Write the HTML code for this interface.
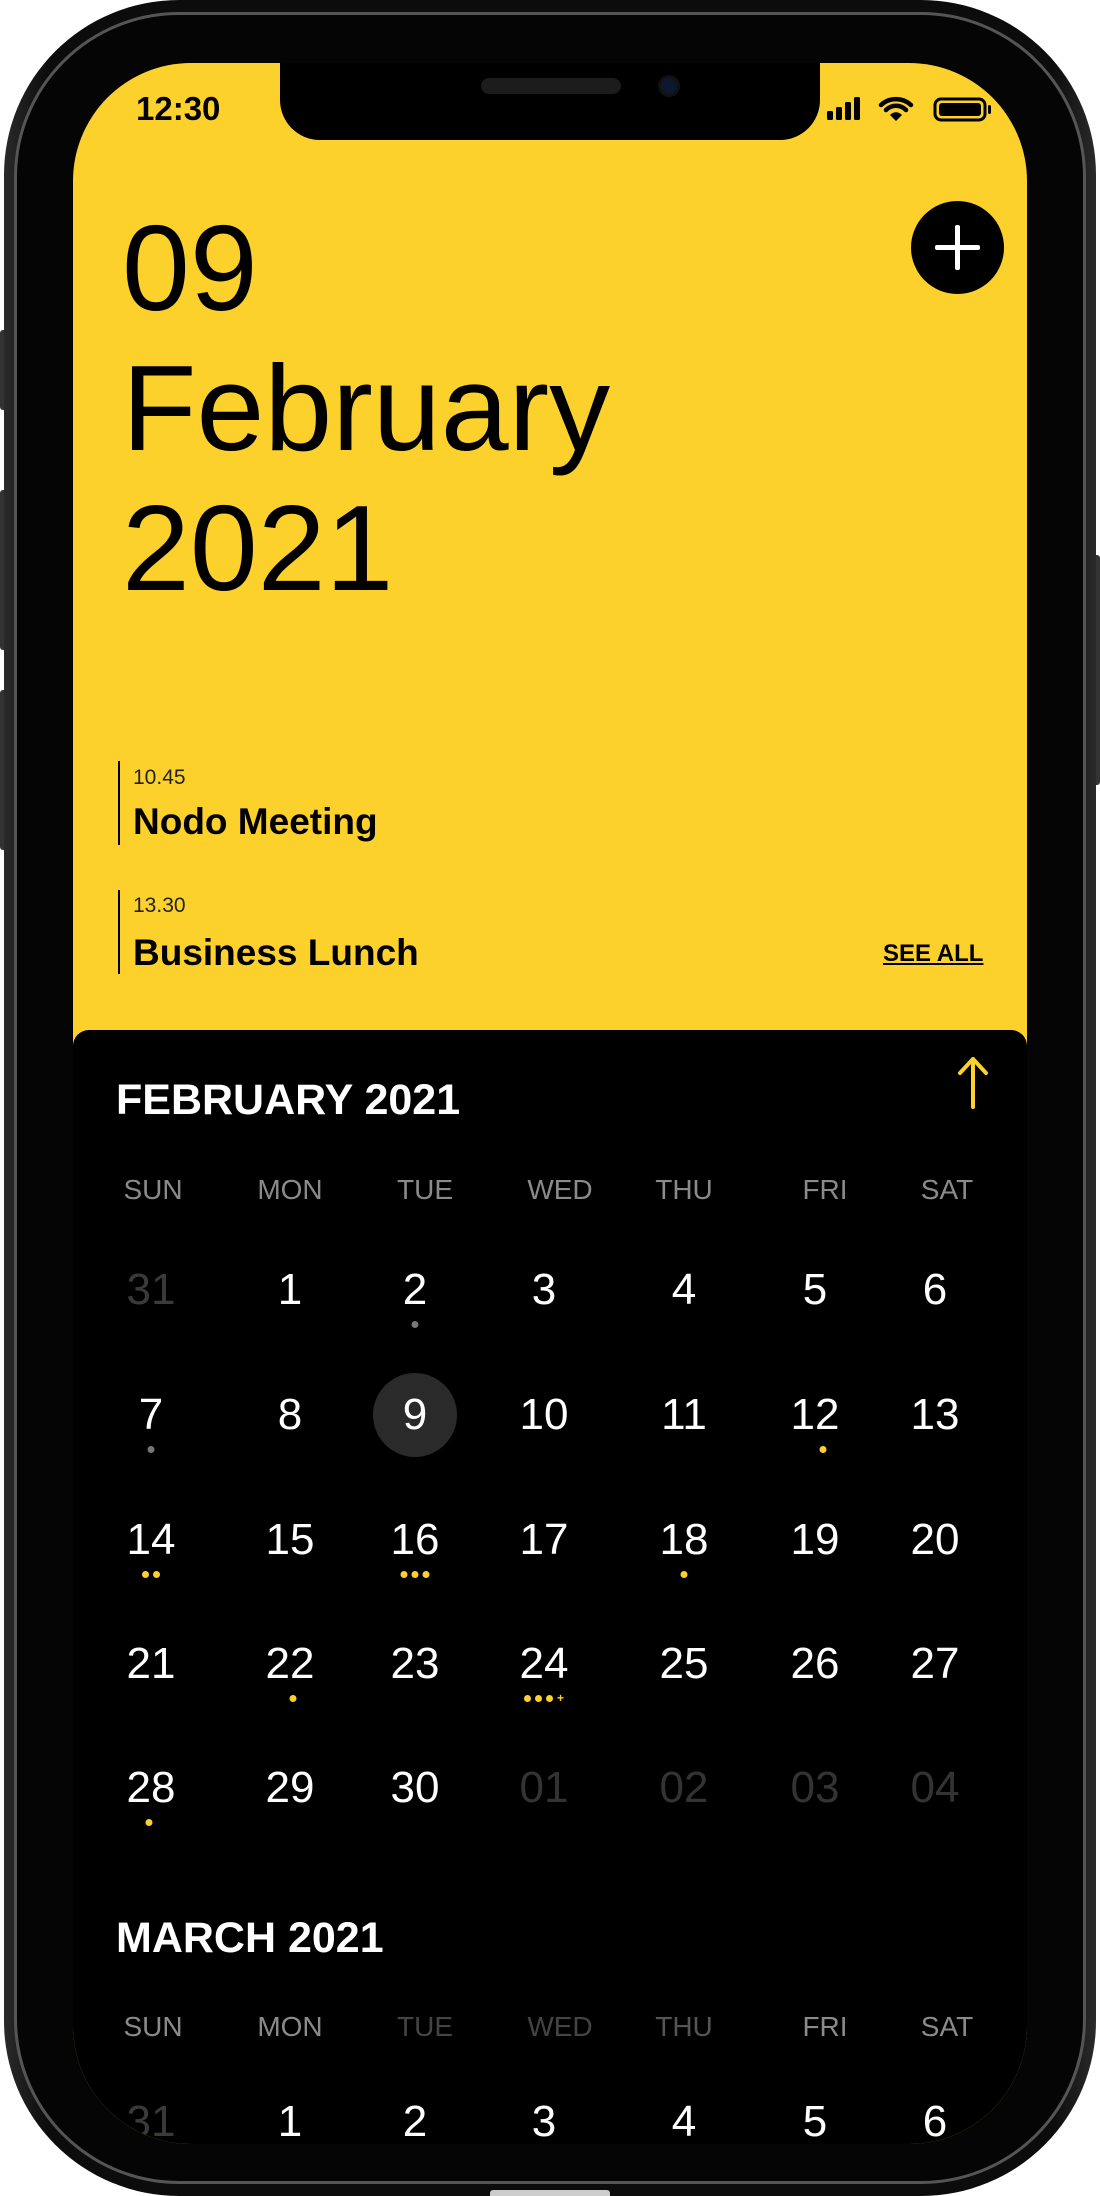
<!DOCTYPE html>
<html><head><meta charset="utf-8"><style>
*{margin:0;padding:0;box-sizing:border-box}
html,body{width:1100px;height:2196px;background:#fff;overflow:hidden;font-family:"Liberation Sans",sans-serif}
.abs{position:absolute;white-space:nowrap}
#body{position:absolute;left:4px;top:0;width:1092px;height:2196px;border-radius:175px;background:linear-gradient(90deg,#2a2a2a,#0c0c0c 4%,#0c0c0c 96%,#2a2a2a);}
#rim{position:absolute;left:14px;top:12px;width:1072px;height:2172px;border-radius:165px;border:3px solid #555;background:#050505}
#screen{position:absolute;left:73px;top:63px;width:954px;height:2081px;border-radius:118px;overflow:hidden;background:#FDD12B}
.btn{position:absolute;background:#333;border-radius:3px}
.wd{position:absolute;width:120px;text-align:center;font-size:28px;color:#8a8a8a;transform:translateX(-50%);line-height:40px}
.dt{position:absolute;width:120px;text-align:center;font-size:44px;color:#fff;transform:translateX(-50%);line-height:56px}
.dots{position:absolute;display:flex;gap:4px;transform:translateX(-50%)}
.dots i{display:block;width:7px;height:7px;border-radius:50%;background:#FDD12B}
</style></head><body>
<div class="btn" style="left:0;top:330px;width:8px;height:80px"></div>
<div class="btn" style="left:0;top:490px;width:8px;height:160px"></div>
<div class="btn" style="left:0;top:690px;width:8px;height:160px"></div>
<div class="btn" style="left:1092px;top:555px;width:8px;height:230px"></div>
<div id="body"></div>
<div id="rim"></div>
<div id="screen">
  <div class="abs" style="left:207px;top:-10px;width:540px;height:87px;background:#000;border-radius:0 0 40px 40px"></div>
  <div class="abs" style="left:408px;top:15px;width:140px;height:16px;background:#1c1c1c;border-radius:8px"></div>
  <div class="abs" style="left:585px;top:12px;width:22px;height:22px;background:#0b1830;border-radius:50%;border:3px solid #111"></div>
  <div class="abs" style="left:63px;top:26px;font-size:33px;font-weight:700;line-height:40px;color:#000">12:30</div>
  <svg class="abs" style="left:750px;top:30px" width="190" height="32" viewBox="0 0 190 32">
    <rect x="4" y="18" width="6" height="9" rx="1.5"/><rect x="13" y="14" width="6" height="13" rx="1.5"/><rect x="22" y="9" width="6" height="18" rx="1.5"/><rect x="31" y="4" width="6" height="23" rx="1.5"/>
    <path d="M58 12a22 22 0 0 1 30 0" stroke="#000" stroke-width="4.5" fill="none" stroke-linecap="round"/>
    <path d="M63 17a14 14 0 0 1 20 0" stroke="#000" stroke-width="4.5" fill="none" stroke-linecap="round"/>
    <path d="M67 22l6 6 6-6a8 8 0 0 0-12 0z"/>
    <rect x="112" y="6" width="50" height="21" rx="6" fill="none" stroke="#000" stroke-width="3"/>
    <rect x="116" y="10" width="42" height="13" rx="3"/>
    <rect x="165" y="12" width="3" height="9" rx="1.5"/>
  </svg>
  <div class="abs" style="left:49px;top:135px;font-size:122px;line-height:140px;color:#000">09<br>February<br>2021</div>
  <div class="abs" style="left:838px;top:138px;width:93px;height:93px;border-radius:50%;background:#000"></div>
  <div class="abs" style="left:882px;top:162px;width:5px;height:45px;background:#fff;border-radius:2px"></div>
  <div class="abs" style="left:862px;top:182px;width:45px;height:5px;background:#fff;border-radius:2px"></div>
  <div class="abs" style="left:45px;top:698px;width:2px;height:84px;background:#000"></div>
  <div class="abs" style="left:60px;top:702px;font-size:21px;line-height:26px;color:#222">10.45</div>
  <div class="abs" style="left:60px;top:737px;font-size:37px;font-weight:700;line-height:44px;color:#000">Nodo Meeting</div>
  <div class="abs" style="left:45px;top:827px;width:2px;height:84px;background:#000"></div>
  <div class="abs" style="left:60px;top:830px;font-size:21px;line-height:26px;color:#222">13.30</div>
  <div class="abs" style="left:60px;top:868px;font-size:37px;font-weight:700;line-height:44px;color:#000">Business Lunch</div>
  <div class="abs" style="left:810px;top:876px;font-size:24px;font-weight:700;line-height:30px;color:#000;text-decoration:underline">SEE ALL</div>
  <div class="abs" style="left:0;top:967px;width:954px;height:1200px;background:#000;border-radius:16px 16px 0 0">
    <div class="abs" style="left:43px;top:44px;font-size:43px;font-weight:700;line-height:52px;color:#fff">FEBRUARY 2021</div>
    <svg class="abs" style="left:882px;top:25px" width="36" height="56" viewBox="0 0 36 56"><path d="M18 52V4M5 18L18 4 31 18" stroke="#FDD12B" stroke-width="4" fill="none" stroke-linecap="round" stroke-linejoin="round"/></svg>
    <div class="wd" style="left:80px;top:140px">SUN</div><div class="wd" style="left:217px;top:140px">MON</div><div class="wd" style="left:352px;top:140px">TUE</div><div class="wd" style="left:487px;top:140px">WED</div><div class="wd" style="left:611px;top:140px">THU</div><div class="wd" style="left:752px;top:140px">FRI</div><div class="wd" style="left:874px;top:140px">SAT</div>
    <div class="abs" style="left:300px;top:343px;width:84px;height:84px;border-radius:50%;background:#2a2a2a"></div>
    <div class="dt" style="left:78px;top:232px;color:#3a3a3a">31</div><div class="dt" style="left:217px;top:232px">1</div><div class="dt" style="left:342px;top:232px">2</div><div class="dt" style="left:471px;top:232px">3</div><div class="dt" style="left:611px;top:232px">4</div><div class="dt" style="left:742px;top:232px">5</div><div class="dt" style="left:862px;top:232px">6</div>
    <div class="dots" style="left:342px;top:291px"><i style="background:#777"></i></div>
    <div class="dt" style="left:78px;top:357px">7</div><div class="dt" style="left:217px;top:357px">8</div><div class="dt" style="left:342px;top:357px">9</div><div class="dt" style="left:471px;top:357px">10</div><div class="dt" style="left:611px;top:357px">11</div><div class="dt" style="left:742px;top:357px">12</div><div class="dt" style="left:862px;top:357px">13</div>
    <div class="dots" style="left:78px;top:416px"><i style="background:#777"></i></div>
    <div class="dots" style="left:750px;top:416px"><i></i></div>
    <div class="dt" style="left:78px;top:482px">14</div><div class="dt" style="left:217px;top:482px">15</div><div class="dt" style="left:342px;top:482px">16</div><div class="dt" style="left:471px;top:482px">17</div><div class="dt" style="left:611px;top:482px">18</div><div class="dt" style="left:742px;top:482px">19</div><div class="dt" style="left:862px;top:482px">20</div>
    <div class="dots" style="left:78px;top:541px"><i></i><i></i></div>
    <div class="dots" style="left:342px;top:541px"><i></i><i></i><i></i></div>
    <div class="dots" style="left:611px;top:541px"><i></i></div>
    <div class="dt" style="left:78px;top:606px">21</div><div class="dt" style="left:217px;top:606px">22</div><div class="dt" style="left:342px;top:606px">23</div><div class="dt" style="left:471px;top:606px">24</div><div class="dt" style="left:611px;top:606px">25</div><div class="dt" style="left:742px;top:606px">26</div><div class="dt" style="left:862px;top:606px">27</div>
    <div class="dots" style="left:220px;top:665px"><i></i></div>
    <div class="dots" style="left:471px;top:665px"><i></i><i></i><i></i><span style="color:#FDD12B;font-size:12px;line-height:7px;font-weight:700">+</span></div>
    <div class="dt" style="left:78px;top:730px">28</div><div class="dt" style="left:217px;top:730px">29</div><div class="dt" style="left:342px;top:730px">30</div><div class="dt" style="left:471px;top:730px;color:#333">01</div><div class="dt" style="left:611px;top:730px;color:#333">02</div><div class="dt" style="left:742px;top:730px;color:#333">03</div><div class="dt" style="left:862px;top:730px;color:#333">04</div>
    <div class="dots" style="left:76px;top:789px"><i></i></div>
    <div class="abs" style="left:43px;top:882px;font-size:43px;font-weight:700;line-height:52px;color:#fff">MARCH 2021</div>
    <div class="wd" style="left:80px;top:977px">SUN</div><div class="wd" style="left:217px;top:977px">MON</div><div class="wd" style="left:352px;top:977px;color:#444">TUE</div><div class="wd" style="left:487px;top:977px;color:#444">WED</div><div class="wd" style="left:611px;top:977px;color:#555">THU</div><div class="wd" style="left:752px;top:977px">FRI</div><div class="wd" style="left:874px;top:977px">SAT</div>
    <div class="dt" style="left:78px;top:1064px;color:#3a3a3a">31</div><div class="dt" style="left:217px;top:1064px">1</div><div class="dt" style="left:342px;top:1064px">2</div><div class="dt" style="left:471px;top:1064px">3</div><div class="dt" style="left:611px;top:1064px">4</div><div class="dt" style="left:742px;top:1064px">5</div><div class="dt" style="left:862px;top:1064px">6</div>
  </div>
</div>
<div class="abs" style="left:490px;top:2190px;width:120px;height:6px;background:#ccc;border-radius:3px 3px 0 0"></div>
</body></html>
